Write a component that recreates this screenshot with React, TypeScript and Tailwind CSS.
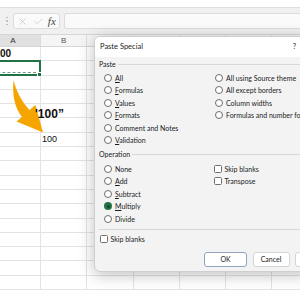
import React from 'react';
import { X, Check } from 'lucide-react';

const COLS = [55, 46.3, 46.3, 46.3, 46.3, 46.3, 46.3];
// only A and B show; the others sit under the dialog
const LETTERS = ['A', 'B', '', '', '', '', ''];
const ROWS = 17;

const Label = ({ text, u }: { text: string; u?: number }) => {
  if (u === undefined) return <span>{text}</span>;
  return (
    <span>
      {text.slice(0, u)}
      <span className="underline underline-offset-[1px]">{text[u]}</span>
      {text.slice(u + 1)}
    </span>
  );
};

const Radio = ({ text, u, checked, gap = 'gap-[3px]' }: { text: string; u?: number; checked?: boolean; gap?: string }) => (
  <div className={`flex h-[12.5px] items-center ${gap} whitespace-nowrap`}>
    {checked ? (
      <span className="flex h-[8px] w-[8px] shrink-0 items-center justify-center rounded-full bg-[#217346]">
        <span className="h-[3px] w-[3px] rounded-full bg-[#0f4a2a]" />
      </span>
    ) : (
      <span className="h-[8px] w-[8px] shrink-0 rounded-full border border-[#6e6e6e] bg-white" />
    )}
    <Label text={text} u={u} />
  </div>
);

const Checkbox = ({ text, className = '' }: { text: string; className?: string }) => (
  <div className={`flex h-[12.5px] items-center gap-[2.5px] whitespace-nowrap ${className}`}>
    <span className="h-[8px] w-[8px] shrink-0 rounded-[1.5px] border border-[#6e6e6e] bg-white" />
    <span>{text}</span>
  </div>
);

const Section = ({ text }: { text: string }) => (
  <div className="flex h-[10px] items-center gap-[2px]">
    <span>{text}</span>
    <span className="h-0 flex-1 border-t border-[#d8d8d8]" />
  </div>
);

export default function App() {
  return (
    <div className="relative h-[300px] w-[300px] overflow-hidden bg-white font-['Liberation_Sans',Arial,sans-serif] text-[#222]">
      <div className="h-[8px] border-b border-[#dedede] bg-white" />

      {/* formula bar */}
      <div className="flex h-[26px] items-center bg-[#f0f0f0]">
        <div className="ml-[6px] flex w-[2px] flex-col gap-[2px]">
          {[0, 1, 2].map(i => (
            <span key={i} className="h-[1.5px] w-[1.5px] rounded-full bg-[#b5b5b5]" />
          ))}
        </div>
        <div className="ml-[5px] flex h-[16px] w-[47px] items-center justify-around rounded-[3px] border border-[#dcdcdc] bg-[#fafafa] px-[1px]">
          <X size={11} strokeWidth={1} color="#a8a8a8" />
          <Check size={11} strokeWidth={1} color="#a8a8a8" />
          <span className="font-['Liberation_Serif',serif] text-[11px] italic leading-none text-[#444]">fx</span>
        </div>
        <div className="ml-[4px] h-[16px] flex-1 rounded-l-[3px] border border-r-0 border-[#dcdcdc] bg-[#fafafa]" />
      </div>

      {/* column headers */}
      <div className="-ml-[14px] flex h-[13px] border-y border-[#d6d6d6] bg-[#f5f5f5]">
        {COLS.map((w, i) => (
          <div
            key={i}
            style={{ width: w }}
            className={`flex shrink-0 items-center justify-center border-r border-[#dcdcdc] text-[8px] ${i === 0 ? 'bg-[#e0e0e0] text-[#333]' : 'text-[#555]'}`}
          >
            {LETTERS[i]}
          </div>
        ))}
      </div>

      {/* grid */}
      <div className="-ml-[14px]">
        {Array.from({ length: ROWS }).map((_, r) => (
          <div key={r} className="flex h-[14.3px]">
            {COLS.map((w, c) => (
              <div key={c} style={{ width: w }} className="relative flex shrink-0 items-center overflow-visible border-r border-b border-[#e3e3e3]">
                {r === 0 && c === 0 && (
                  <span className="pl-[8.5px] text-[10px] font-bold leading-none text-[#111]">100</span>
                )}
                {r === 1 && c === 0 && (
                  <div className="absolute -top-[1px] -left-[1px] -right-[1px] -bottom-[1px] border-2 border-[#217346]">
                    <div className="absolute bottom-[1px] left-0 right-[3px] border-b border-dashed border-[#6f9e82]" />
                    <div className="absolute -bottom-[3px] -right-[3px] h-[5px] w-[5px] border border-white bg-[#217346]" />
                  </div>
                )}
                {r === 6 && c === 1 && <span className="pl-[1px] pt-[1px] text-[9px] leading-none text-[#111]">100</span>}
              </div>
            ))}
          </div>
        ))}
      </div>

      {/* annotation arrow */}
      <svg className="absolute left-0 top-0" width="60" height="140" viewBox="0 0 60 140">
        <path
          d="M13.5 80 C16 90 20.5 100 29.5 110 L35.5 105 L43 132.5 L16.5 121.5 L22 117 C15 108 12 96 13.5 80 Z"
          fill="#f5a500"
        />
      </svg>
      <span className="absolute left-[35px] top-[108px] text-[12px] font-bold leading-none text-[#111]">'100”</span>

      {/* Paste Special dialog */}
      <div className="absolute left-[94px] top-[36px] w-[216px] overflow-hidden rounded-[6px] border border-[#cfcfcf] bg-[#f3f3f3] font-[Lato,sans-serif] text-[7px] text-[#1b1b1b] shadow-[0_3px_16px_rgba(0,0,0,0.25)]">
        <div className="flex h-[20px] items-center justify-between bg-white pl-[5px] pr-[13px] text-[7.5px]">
          <span>Paste Special</span>
          <span>?</span>
        </div>
        <div className="px-[4px] pt-[2px] pb-[4px]">
          <Section text="Paste" />
          <div className="mt-[2.5px] grid grid-cols-[110.5px_1fr] pl-[5px]">
            <div className="flex flex-col">
              <Radio text="All" u={0} />
              <Radio text="Formulas" u={0} />
              <Radio text="Values" u={0} />
              <Radio text="Formats" u={0} />
              <Radio text="Comment and Notes" />
              <Radio text="Validation" u={0} />
            </div>
            <div className="flex flex-col">
              <Radio text="All using Source theme" gap="gap-[3.5px]" />
              <Radio text="All except borders" gap="gap-[3.5px]" />
              <Radio text="Column widths" gap="gap-[3.5px]" />
              <Radio text="Formulas and number formats" gap="gap-[3.5px]" />
            </div>
          </div>

          <div className="mt-[2.5px]">
            <Section text="Operation" />
          </div>
          <div className="mt-[3.5px] grid grid-cols-[110px_1fr] pl-[5px]">
            <div className="flex flex-col">
              <Radio text="None" />
              <Radio text="Add" u={0} />
              <Radio text="Subtract" u={0} />
              <Radio text="Multiply" u={0} checked />
              <Radio text="Divide" />
            </div>
            <div className="flex flex-col">
              <Checkbox text="Skip blanks" />
              <Checkbox text="Transpose" />
            </div>
          </div>

          <div className="mt-[4px] border-t border-[#d8d8d8]" />
          <Checkbox text="Skip blanks" className="mt-[3px] h-[12px] pl-[1px]" />

          <div className="mt-[7px] flex h-[15px] gap-[5.5px] pl-[105px]">
            <button className="h-full w-[43px] shrink-0 rounded-[3px] border border-[#8fa4bd] bg-white text-[7px]">OK</button>
            <button className="h-full w-[37px] shrink-0 rounded-[3px] border border-[#d4d4d4] bg-white text-[7px]">Cancel</button>
            <button className="h-full w-[50px] shrink-0 rounded-[3px] border border-[#d4d4d4] bg-white text-[7px]">Paste Link</button>
          </div>
        </div>
      </div>
    </div>
  );
}
